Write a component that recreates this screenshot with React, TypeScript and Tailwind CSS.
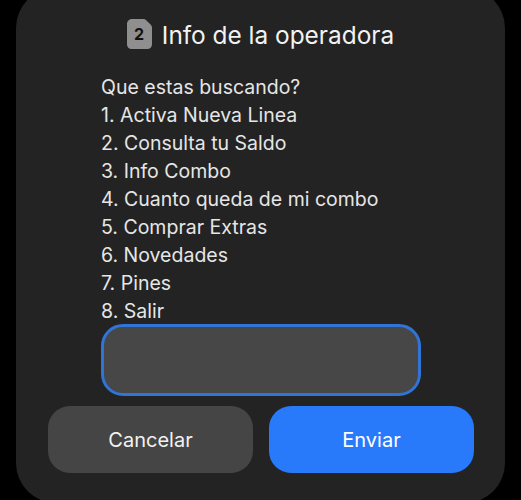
import React from 'react';

const options = [
  'Que estas buscando?',
  '1. Activa Nueva Linea',
  '2. Consulta tu Saldo',
  '3. Info Combo',
  '4. Cuanto queda de mi combo',
  '5. Comprar Extras',
  '6. Novedades',
  '7. Pines',
  '8. Salir',
];

function SimIcon() {
  return (
    <svg width="25" height="30" viewBox="0 0 25 30" className="shrink-0">
      <path
        d="M5 0H16.5C17.6 0 18.4 0.4 19.2 1.2L23.8 5.8C24.6 6.6 25 7.4 25 8.5V25.5C25 28 23 30 20.5 30H4.5C2 30 0 28 0 25.5V5C0 2.2 2.2 0 5 0Z"
        fill="#8f8f8f"
      />
      <text x="12" y="21" textAnchor="middle" fontSize="16" fontWeight="700" fill="#111111" fontFamily="Inter, sans-serif">
        2
      </text>
    </svg>
  );
}

export default function App() {
  return (
    <div className="h-[500px] w-[521px] overflow-hidden bg-black font-['Inter','Noto_Sans',sans-serif]">
      <div className="mx-4 -mt-3 h-[515px] rounded-[40px] bg-[#232323] pt-[31px]">
        {/* Title */}
        <div className="flex h-[32px] items-start justify-center gap-[10px]">
          <SimIcon />
          <h1 className="text-[24.4px] leading-[32px] text-[#f2f2f2]">Info de la operadora</h1>
        </div>

        {/* Message */}
        <div className="mt-[22px] pl-[85px] text-[19.5px] leading-[28px] text-[#e6e6e6]">
          {options.map((line) => (
            <p key={line}>{line}</p>
          ))}
        </div>

        {/* Input */}
        <div className="ml-[85px] mt-[-1px] h-[72px] w-[320px] rounded-[22px] border-[3px] border-[#2f74d6] bg-[#474747]" />

        {/* Buttons */}
        <div className="ml-8 mt-[10px] flex gap-4">
          <button className="h-[67px] w-[205px] rounded-[22px] bg-[#454545] text-[20px] text-[#f2f2f2]">Cancelar</button>
          <button className="h-[67px] w-[205px] rounded-[22px] bg-[#2979fb] text-[20px] text-white">Enviar</button>
        </div>
      </div>
    </div>
  );
}
